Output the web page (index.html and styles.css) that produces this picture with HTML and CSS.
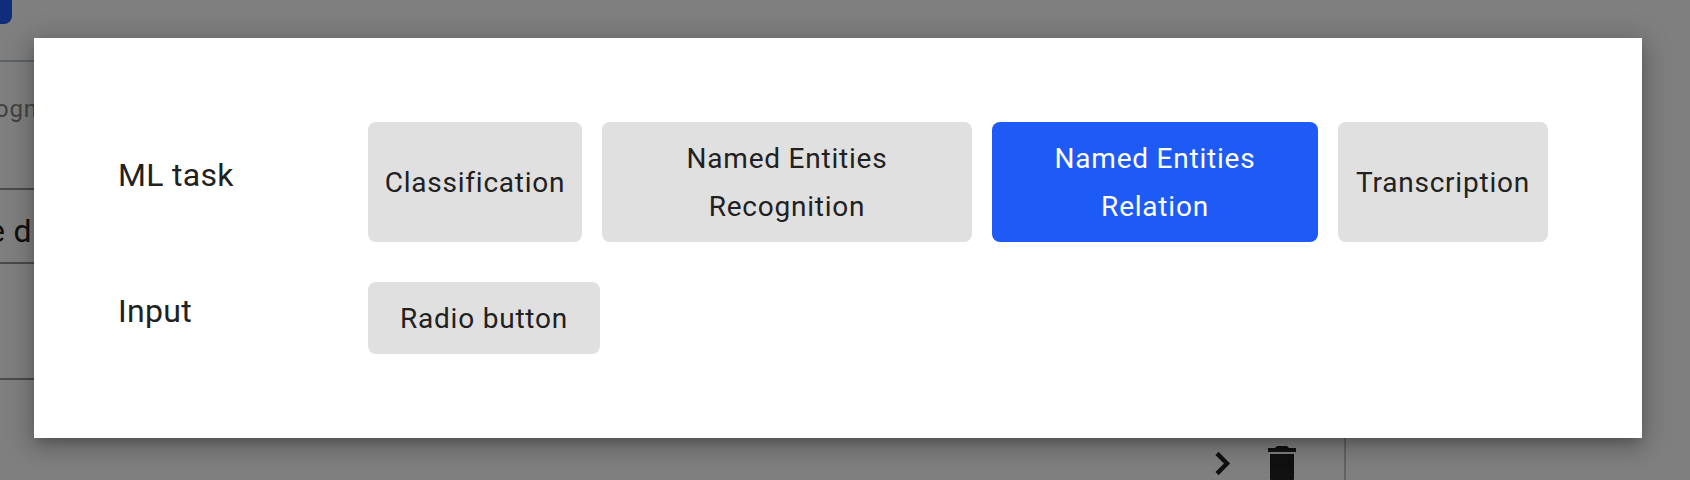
FILE: index.html
```html
<!DOCTYPE html>
<html lang="en">
<head>
<meta charset="utf-8">
<title>Job settings</title>
<link rel="stylesheet" href="styles.css">
</head>
<body>
<div class="page">
  <div class="side">
    <div class="top"><span class="primary"></span></div>
    <div class="hint"><span>ogn</span></div>
    <div class="field"><span>e d</span></div>
    <div class="blank"></div>
  </div>
  <div class="footer">
    <svg class="chevron" width="20" height="26" viewBox="0 0 20 26"><path d="M3 2.4 L13 12.5 L3 22.6" fill="none" stroke="#222" stroke-width="4.4"/></svg>
    <svg class="trash" width="28" height="36" viewBox="0 0 28 36"><path d="M0 2h7l2-2h10l2 2h7v4H0zM2 8h24v24a4 4 0 0 1-4 4H6a4 4 0 0 1-4-4z" fill="#222"/></svg>
  </div>
</div>
<div class="overlay">
  <main class="modal">
    <div class="row">
      <div class="label">ML task</div>
      <div class="options">
        <button class="option classification">Classification</button>
        <button class="option recognition">Named Entities Recognition</button>
        <button class="option relation selected">Named Entities Relation</button>
        <button class="option transcription">Transcription</button>
      </div>
    </div>
    <div class="row input-row">
      <div class="label">Input</div>
      <div class="options"><button class="option radio">Radio button</button></div>
    </div>
  </main>
</div>
</body>
</html>
```
FILE: styles.css
```css
* { box-sizing: border-box; }
body {
  margin: 0;
  height: 480px;
  overflow: hidden;
  position: relative;
  font-family: Roboto, sans-serif;
  color: #212121;
  background: #fff;
}
.page { display: flex; height: 480px; overflow: hidden; }
.side { width: 60px; overflow: hidden; }
.top { height: 62px; border-bottom: 2px solid #bdc6d0; }
.primary { display: block; width: 12px; height: 24px; background: #1e5af6; border-radius: 0 0 8px 0; }
.hint {
  height: 128px;
  padding-top: 31px;
  border-bottom: 2px solid #949494;
  color: #858585;
  font-size: 24px;
  line-height: 32px;
  letter-spacing: .8px;
}
.hint span { display: block; margin-left: -5px; }
.field {
  height: 74px;
  padding-top: 22px;
  border-bottom: 2px solid #949494;
  font-size: 32px;
  line-height: 38px;
  letter-spacing: .3px;
  white-space: nowrap;
}
.field span { display: block; margin-left: -12px; }
.blank { height: 116px; border-bottom: 2px solid #949494; }
.footer {
  align-self: flex-end;
  display: flex;
  width: 1286px;
  height: 44px;
  padding: 10px 0 0 1154px;
  border-right: 2px solid #bdc6d0;
}
.chevron { flex: none; margin-top: 5px; }
.trash { flex: none; margin-left: 34px; }
.overlay {
  position: absolute;
  inset: 0;
  padding: 38px 48px 42px 34px;
  background: rgba(0, 0, 0, .5);
}
.modal {
  height: 400px;
  padding: 84px;
  background: #fff;
  box-shadow: 0 6px 10px -4px rgba(0,0,0,.2), 0 8px 20px 2px rgba(0,0,0,.14), 0 4px 28px 4px rgba(0,0,0,.14);
}
.row { display: flex; }
.label {
  width: 250px;
  flex: none;
  padding-top: 33px;
  font-size: 32px;
  line-height: 40px;
  letter-spacing: .3px;
}
.options { display: flex; gap: 20px; }
.option {
  flex: none;
  height: 120px;
  padding: 2px 0 0;
  border: 0;
  border-radius: 8px;
  background: #e0e0e0;
  color: #212121;
  font: 28px/48px Roboto, sans-serif;
  letter-spacing: .78px;
}
.classification { width: 214px; }
.recognition { width: 370px; padding: 2px 70px 0; }
.relation { width: 326px; padding: 2px 50px 0; }
.transcription { width: 210px; }
.selected { background: #1e5af6; color: #fff; }
.input-row { margin-top: 40px; }
.input-row .label { padding-top: 9px; }
.radio { width: 232px; height: 72px; }
```
